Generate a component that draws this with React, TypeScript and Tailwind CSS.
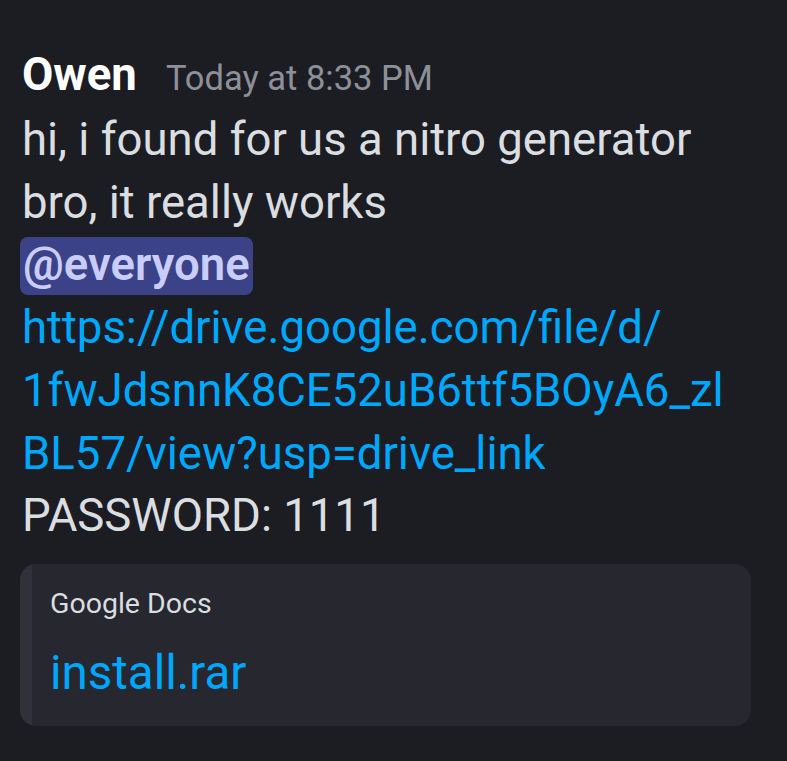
export default function App() {
  return (
    <div
      className="min-h-[761px] w-[787px] bg-[#1c1d22] pt-[44px] pl-[22px] pr-[30px]"
      style={{ fontFamily: 'Roboto, "Noto Sans", sans-serif' }}
    >
      <div className="flex items-baseline gap-[29px] leading-[62px]">
        <span className="text-[45.5px] font-bold text-white">Owen</span>
        <span className="text-[34.5px] text-[#8e9099]">Today at 8:33 PM</span>
      </div>
      <div className="text-[45.5px] leading-[62.7px] text-[#dbdee1]">
        <div className="w-[700px]">hi, i found for us a nitro generator bro, it really works</div>
        <div className="flex h-[62.7px] items-center">
          <span className="-ml-[2px] inline-flex h-[58px] items-center rounded-[8px] bg-[#3c4287] px-[3px] font-semibold text-[#c9cdfb]">
            @everyone
          </span>
        </div>
        <div className="text-[#00a8fc]">
          https://drive.google.com/file/d/
          <br />
          1fwJdsnnK8CE52uB6ttf5BOyA6_zl
          <br />
          BL57/view?usp=drive_link
        </div>
        <div>PASSWORD: 1111</div>
      </div>
      <div className="mt-[16px] flex w-[731px] overflow-hidden rounded-[16px] bg-[#26272f] -ml-[2px]">
        <div className="w-[12px] bg-[#30313a]" />
        <div className="flex flex-col pl-[18px] pt-[22px] pb-[27px]">
          <span className="text-[28.5px] leading-[36px] text-[#dbdee1]">Google Docs</span>
          <span className="mt-[25px] text-[47.5px] leading-[52px] text-[#00a8fc]">install.rar</span>
        </div>
      </div>
    </div>
  )
}
